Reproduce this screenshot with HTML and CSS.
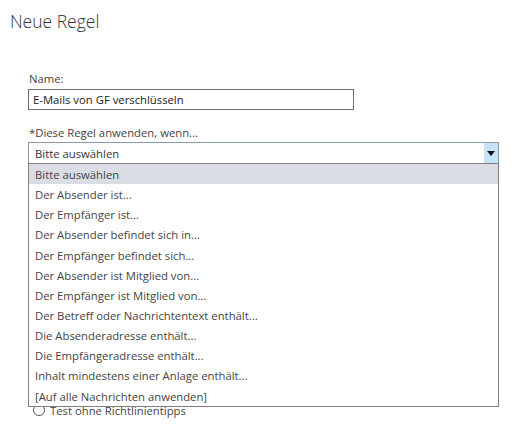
FILE: index.html
```html
<!DOCTYPE html>
<html lang="de">
<head>
<meta charset="utf-8">
<link rel="stylesheet" href="styles.css">
</head>
<body>
<div class="page">
  <h1 class="title">Neue Regel</h1>
  <div class="form">
    <div class="field">
      <label class="label">Name:</label>
      <div class="input">E-Mails von GF verschlüsseln</div>
    </div>
    <div class="field">
      <label class="label">*Diese Regel anwenden, wenn...</label>
      <div class="selectwrap">
        <div class="select">
          <span class="select-text">Bitte auswählen</span>
          <span class="arrow"><span class="tri"></span></span>
        </div>
        <ul class="list">
          <li class="item selected">Bitte auswählen</li>
          <li class="item">Der Absender ist...</li>
          <li class="item">Der Empfänger ist...</li>
          <li class="item">Der Absender befindet sich in...</li>
          <li class="item">Der Empfänger befindet sich...</li>
          <li class="item">Der Absender ist Mitglied von...</li>
          <li class="item">Der Empfänger ist Mitglied von...</li>
          <li class="item">Der Betreff oder Nachrichtentext enthält...</li>
          <li class="item">Die Absenderadresse enthält...</li>
          <li class="item">Die Empfängeradresse enthält...</li>
          <li class="item">Inhalt mindestens einer Anlage enthält...</li>
          <li class="item">[Auf alle Nachrichten anwenden]</li>
        </ul>
      </div>
    </div>
    <div class="hidden-area"></div>
    <div class="radio-row">
      <span class="radio"></span>
      <span class="radio-text">Test ohne Richtlinientipps</span>
    </div>
  </div>
</div>
</body>
</html>
```

FILE: styles.css
```css
html, body {
  margin: 0;
  padding: 0;
  background: #ffffff;
}
body {
  font-family: "Open Sans", "Noto Sans", "Liberation Sans", sans-serif;
  color: #444444;
  font-size: 11.3px;
}
.page {
  width: 524px;
  height: 434px;
  overflow: hidden;
  position: relative;
}
.title {
  margin: 0;
  padding: 9px 0 0 10px;
  font-size: 17.5px;
  font-weight: 300;
  color: #333333;
  line-height: 24px;
}
.form {
  padding: 38px 0 0 28px;
}
.field {
  display: flex;
  flex-direction: column;
}
.label {
  display: block;
  line-height: 16px;
  padding-left: 1px;
  color: #444444;
}
.input {
  margin-top: 2px;
  width: 316px;
  height: 19px;
  border: 1px solid #6d6d6d;
  padding: 0 4px;
  line-height: 20px;
  color: #222222;
}
.field + .field {
  margin-top: 15px;
}
.selectwrap {
  position: relative;
  margin-top: 1px;
  width: 471px;
}
.select {
  display: flex;
  align-items: stretch;
  height: 20px;
  border: 1px solid #8b9aa8;
  border-bottom-color: #9aa6b0;
}
.select-text {
  flex: 1;
  padding: 2px 0 0 6px;
  line-height: 18px;
  color: #333333;
}
.arrow {
  width: 14px;
  background: #c6e4f8;
  display: flex;
  align-items: center;
  justify-content: center;
}
.tri {
  width: 0;
  height: 0;
  border-left: 4px solid transparent;
  border-right: 4px solid transparent;
  border-top: 5px solid #111111;
}
.list {
  position: absolute;
  left: 0;
  top: 21px;
  margin: 0;
  padding: 0;
  list-style: none;
  width: 469px;
  border: 1px solid #7f7f7f;
  background: #ffffff;
  z-index: 2;
}
.item {
  box-sizing: border-box;
  height: 20.15px;
  padding: 2px 0 0 6px;
  line-height: 18px;
  color: #444444;
  white-space: nowrap;
}
.item.selected {
  background: #dadee4;
}
.hidden-area {
  height: 238px;
}
.radio-row {
  display: flex;
  align-items: center;
  gap: 5px;
  padding-left: 5px;
  height: 16px;
}
.radio {
  width: 10px;
  height: 10px;
  border: 1px solid #555555;
  border-radius: 50%;
}
.radio-text {
  color: #444444;
}
```
